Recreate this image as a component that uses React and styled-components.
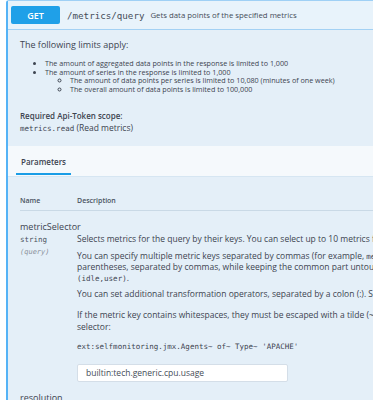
import styled, { createGlobalStyle } from 'styled-components';

const GlobalStyle = createGlobalStyle`
	html, body {
		margin: 0;
		padding: 0;
		background: #fff;
		overflow: hidden;
	}
	body {
		font-family: 'Open Sans', 'Liberation Sans', sans-serif;
		color: #3d4450;
	}
`;

const App = () => {
	return (
		<>
			<GlobalStyle />
			<OpBlock>
				<Summary>
					<Method>GET</Method>
					<Path>/metrics/query</Path>
					<Summ>Gets data points of the specified metrics</Summ>
				</Summary>
				<Intro>
					<Lead>The following limits apply:</Lead>
					<Bullets>
						<li>The amount of aggregated data points in the response is limited to 1,000</li>
						<li>
							The amount of series in the response is limited to 1,000
							<SubBullets>
								<li>The amount of data points per series is limited to 10,080 (minutes of one week)</li>
								<li>The overall amount of data points is limited to 100,000</li>
							</SubBullets>
						</li>
					</Bullets>
					<Scope>
						<strong>Required Api-Token scope:</strong>
						<span>
							<Code>metrics.read</Code> (Read metrics)
						</span>
					</Scope>
				</Intro>
				<TabBar>
					<Tab $active>Parameters</Tab>
				</TabBar>
				<Params>
					<HeadRow>
						<HeadCell>Name</HeadCell>
						<HeadCell>Description</HeadCell>
					</HeadRow>
					<ParamRow $top={9}>
						<ParamName>
							<NameText>metricSelector</NameText>
							<TypeText>string</TypeText>
							<InText>(query)</InText>
						</ParamName>
						<ParamDesc>
							<Para>Selects metrics for the query by their keys. You can select up to 10 metrics for one query.</Para>
							<Para $gap={6}>
								You can specify multiple metric keys separated by commas (for example, <Code>metrickey1,metrickey2</Code>).
								<br />
								parentheses, separated by commas, while keeping the common part untouched. For example,
								<br />
								<Code>(idle,user)</Code>.
							</Para>
							<Para $gap={5}>You can set additional transformation operators, separated by a colon (:). See Metrics selector.</Para>
							<Para $gap={10} $lh={12}>
								If the metric key contains whitespaces, they must be escaped with a tilde (~). For example,
								<br />
								selector:
							</Para>
							<Para $gap={7}>
								<Code>ext:selfmonitoring.jmx.Agents~ of~ Type~ 'APACHE'</Code>
							</Para>
							<Input defaultValue="builtin:tech.generic.cpu.usage" />
						</ParamDesc>
					</ParamRow>
					<ParamRow $top={9}>
						<ParamName>
							<NameText>resolution</NameText>
						</ParamName>
					</ParamRow>
				</Params>
			</OpBlock>
		</>
	);
};

const OpBlock = styled.div`
	margin-left: 6px;
	width: 700px;
	border: 1px solid #9fd0f5;
	border-left: 2px solid #55b3f6;
	border-radius: 3px 0 0 0;
	background: #e4eff8;
`;

const Summary = styled.div`
	display: flex;
	align-items: center;
	height: 28px;
	padding: 0 3px;
	background: #e8f3fb;
	border-bottom: 1px solid #a3d1f4;
`;

const Method = styled.div`
	width: 49px;
	height: 18px;
	display: flex;
	align-items: center;
	justify-content: center;
	background: #1fa0e8;
	border-radius: 2px;
	color: #fff;
	font-size: 9px;
	font-weight: 600;
	margin-right: 7px;
`;

const Path = styled.span`
	font-family: 'DejaVu Sans Mono', monospace;
	font-size: 9.2px;
	color: #454c58;
	margin-right: 6px;
`;

const Summ = styled.span`
	font-size: 7.8px;
	color: #454c58;
`;

const Intro = styled.div`
	padding: 8px 12px 12px;
`;

const Lead = styled.p`
	margin: 0;
	font-size: 9px;
	line-height: 14px;
`;

const Bullets = styled.ul`
	margin: 7px 0 0;
	padding-left: 25px;
	font-size: 7.2px;
	line-height: 8.7px;
	li {
		list-style: disc;
	}
`;

const SubBullets = styled.ul`
	margin: 0;
	padding-left: 25px;
	li {
		list-style: circle;
	}
`;

const Scope = styled.div`
	display: flex;
	flex-direction: column;
	margin-top: 16px;
	font-size: 8.5px;
	line-height: 12px;
	strong {
		font-size: 8px;
		font-weight: 600;
	}
`;

const Code = styled.code`
	font-family: 'DejaVu Sans Mono', monospace;
	font-size: 7.5px;
	line-height: 1;
`;

const TabBar = styled.div`
	display: flex;
	padding: 0 8px;
	height: 30px;
	background: #f5f9fc;
	border-bottom: 1px solid #d6e6f2;
`;

const Tab = styled.div`
	display: flex;
	align-items: center;
	padding: 4px 5px 0;
	font-size: 8px;
	font-weight: 600;
	color: #3d4450;
	border-bottom: 2px solid ${(p) => (p.$active ? '#1a9de6' : 'transparent')};
	margin-bottom: 1px;
`;

const Params = styled.div`
	padding: 19px 12px 0;
`;

const HeadRow = styled.div`
	display: grid;
	grid-template-columns: 57px 1fr;
	padding-bottom: 5px;
	border-bottom: 1px solid #c9d9e6;
`;

const HeadCell = styled.div`
	font-size: 7px;
	font-weight: 600;
	color: #4a5260;
`;

const ParamRow = styled.div`
	display: grid;
	grid-template-columns: 57px 1fr;
	padding-top: ${(p) => p.$top || 7}px;
`;

const ParamName = styled.div`
	display: flex;
	flex-direction: column;
`;

const NameText = styled.div`
	font-size: 9px;
	line-height: 13px;
	white-space: nowrap;
`;

const TypeText = styled.div`
	font-family: 'DejaVu Sans Mono', monospace;
	font-size: 7.5px;
	line-height: 13px;
	color: #4a5260;
`;

const InText = styled.div`
	font-family: 'DejaVu Sans Mono', monospace;
	font-size: 7px;
	line-height: 13px;
	font-style: italic;
	color: #8a909a;
`;

const ParamDesc = styled.div`
	padding-top: 13px;
`;

const Para = styled.p`
	margin: ${(p) => p.$gap || 6}px 0 0;
	font-size: 8.5px;
	line-height: ${(p) => p.$lh || 11}px;
	white-space: nowrap;
	&:first-child {
		margin-top: 0;
	}
`;

const Input = styled.input`
	display: block;
	margin-top: 13px;
	width: 211px;
	height: 18px;
	box-sizing: border-box;
	padding: 0 8px;
	border: 1px solid #d4dee8;
	border-radius: 2px;
	background: #fff;
	font-family: 'Open Sans', sans-serif;
	font-size: 8.5px;
	color: #454c58;
	outline: none;
`;

export default App;
